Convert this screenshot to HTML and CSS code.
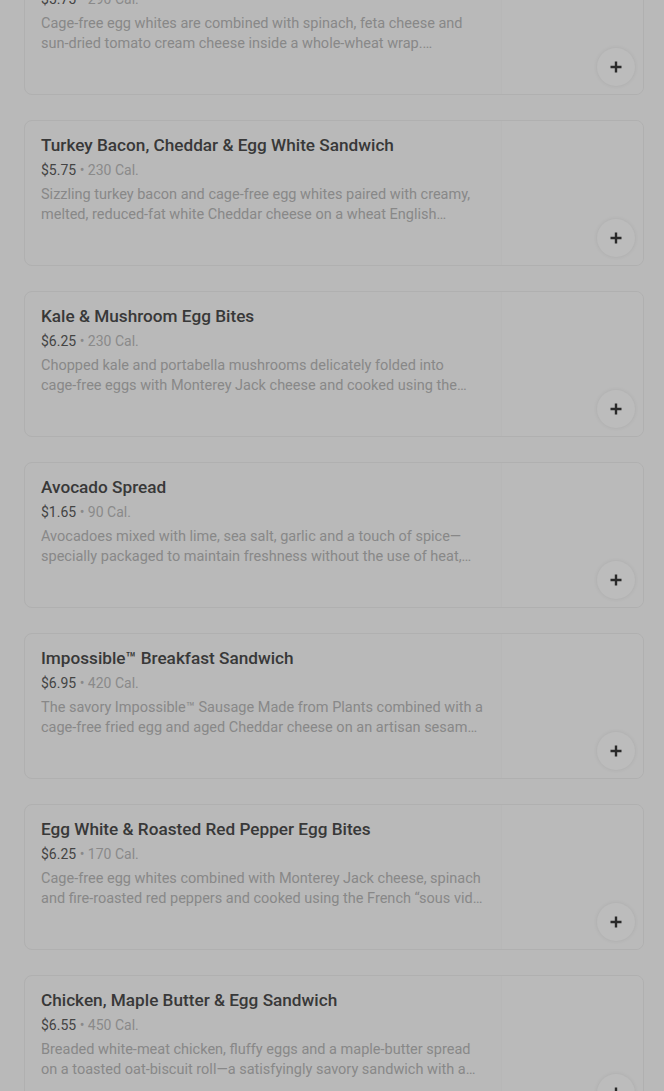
FILE: index.html
```html
<!DOCTYPE html>
<html>
<head>
<meta charset="utf-8">
<link rel="stylesheet" href="styles.css">
</head>
<body>
<main class="list">
  <article class="card">
    <div class="info">
      <h3 class="title">Spinach, Feta &amp; Egg White Wrap</h3>
      <div class="meta"><span class="price">$5.75</span> • 290 Cal.</div>
      <p class="desc"><span>Cage-free egg whites are combined with spinach, feta cheese and</span><span>sun-dried tomato cream cheese inside a whole-wheat wrap.…</span></p>
    </div>
    <div class="media"><button class="add" aria-label="Add"><svg viewBox="0 0 14 14" width="14" height="14"><path d="M7 1.5v11M1.5 7h11" stroke="currentColor" stroke-width="2.4"/></svg></button></div>
  </article>
  <article class="card">
    <div class="info">
      <h3 class="title">Turkey Bacon, Cheddar &amp; Egg White Sandwich</h3>
      <div class="meta"><span class="price">$5.75</span> • 230 Cal.</div>
      <p class="desc"><span>Sizzling turkey bacon and cage-free egg whites paired with creamy,</span><span>melted, reduced-fat white Cheddar cheese on a wheat English…</span></p>
    </div>
    <div class="media"><button class="add" aria-label="Add"><svg viewBox="0 0 14 14" width="14" height="14"><path d="M7 1.5v11M1.5 7h11" stroke="currentColor" stroke-width="2.4"/></svg></button></div>
  </article>
  <article class="card">
    <div class="info">
      <h3 class="title">Kale &amp; Mushroom Egg Bites</h3>
      <div class="meta"><span class="price">$6.25</span> • 230 Cal.</div>
      <p class="desc"><span>Chopped kale and portabella mushrooms delicately folded into</span><span>cage-free eggs with Monterey Jack cheese and cooked using the…</span></p>
    </div>
    <div class="media"><button class="add" aria-label="Add"><svg viewBox="0 0 14 14" width="14" height="14"><path d="M7 1.5v11M1.5 7h11" stroke="currentColor" stroke-width="2.4"/></svg></button></div>
  </article>
  <article class="card">
    <div class="info">
      <h3 class="title">Avocado Spread</h3>
      <div class="meta"><span class="price">$1.65</span> • 90 Cal.</div>
      <p class="desc"><span>Avocadoes mixed with lime, sea salt, garlic and a touch of spice—</span><span>specially packaged to maintain freshness without the use of heat,…</span></p>
    </div>
    <div class="media"><button class="add" aria-label="Add"><svg viewBox="0 0 14 14" width="14" height="14"><path d="M7 1.5v11M1.5 7h11" stroke="currentColor" stroke-width="2.4"/></svg></button></div>
  </article>
  <article class="card">
    <div class="info">
      <h3 class="title">Impossible™ Breakfast Sandwich</h3>
      <div class="meta"><span class="price">$6.95</span> • 420 Cal.</div>
      <p class="desc"><span>The savory Impossible™ Sausage Made from Plants combined with a</span><span>cage-free fried egg and aged Cheddar cheese on an artisan sesam…</span></p>
    </div>
    <div class="media"><button class="add" aria-label="Add"><svg viewBox="0 0 14 14" width="14" height="14"><path d="M7 1.5v11M1.5 7h11" stroke="currentColor" stroke-width="2.4"/></svg></button></div>
  </article>
  <article class="card">
    <div class="info">
      <h3 class="title">Egg White &amp; Roasted Red Pepper Egg Bites</h3>
      <div class="meta"><span class="price">$6.25</span> • 170 Cal.</div>
      <p class="desc"><span>Cage-free egg whites combined with Monterey Jack cheese, spinach</span><span>and fire-roasted red peppers and cooked using the French “sous vid…</span></p>
    </div>
    <div class="media"><button class="add" aria-label="Add"><svg viewBox="0 0 14 14" width="14" height="14"><path d="M7 1.5v11M1.5 7h11" stroke="currentColor" stroke-width="2.4"/></svg></button></div>
  </article>
  <article class="card">
    <div class="info">
      <h3 class="title">Chicken, Maple Butter &amp; Egg Sandwich</h3>
      <div class="meta"><span class="price">$6.55</span> • 450 Cal.</div>
      <p class="desc"><span>Breaded white-meat chicken, fluffy eggs and a maple-butter spread</span><span>on a toasted oat-biscuit roll—a satisfyingly savory sandwich with a…</span></p>
    </div>
    <div class="media"><button class="add" aria-label="Add"><svg viewBox="0 0 14 14" width="14" height="14"><path d="M7 1.5v11M1.5 7h11" stroke="currentColor" stroke-width="2.4"/></svg></button></div>
  </article>
</main>
</body>
</html>
```
FILE: styles.css
```css
* { box-sizing: border-box; }
html, body {
  margin: 0;
  background: #b9b9b9;
  font-family: Roboto, "Noto Sans", sans-serif;
  overflow: hidden;
}
.list {
  display: flex;
  flex-direction: column;
  gap: 25px;
  margin: -51px 20px 0 24px;
}
.card {
  display: flex;
  height: 146px;
  border: 1px solid #b0b0b0;
  border-radius: 8px;
  background: #b9b9b9;
  overflow: hidden;
}
.info {
  width: 476px;
  padding: 14px 16px 0 16px;
  flex: none;
}
.title {
  margin: 0;
  font-size: 17.2px;
  font-weight: 500;
  line-height: 20px;
  color: #383838;
}
.meta {
  margin-top: 5px;
  font-size: 14px;
  line-height: 20px;
  color: #8a8a8a;
}
.price { color: #444; }
.desc {
  margin: 5px 0 0;
  font-size: 14.5px;
  line-height: 20px;
  color: #888;
}
.desc span {
  display: block;
  white-space: nowrap;
  overflow: hidden;
  text-overflow: ellipsis;
}
.media {
  flex: 1;
  display: flex;
  align-items: flex-end;
  justify-content: flex-end;
  padding: 0 8px 8px 0;
  background: #bababa;
  border-left: 1px solid #b7b7b7;
}
.add {
  width: 38px;
  height: 38px;
  border-radius: 50%;
  border: none;
  background: #bcbcbc;
  color: #2a2a2a;
  display: flex;
  align-items: center;
  justify-content: center;
  box-shadow: 0 0 4px rgba(0,0,0,0.08);
  padding: 0;
}
```
